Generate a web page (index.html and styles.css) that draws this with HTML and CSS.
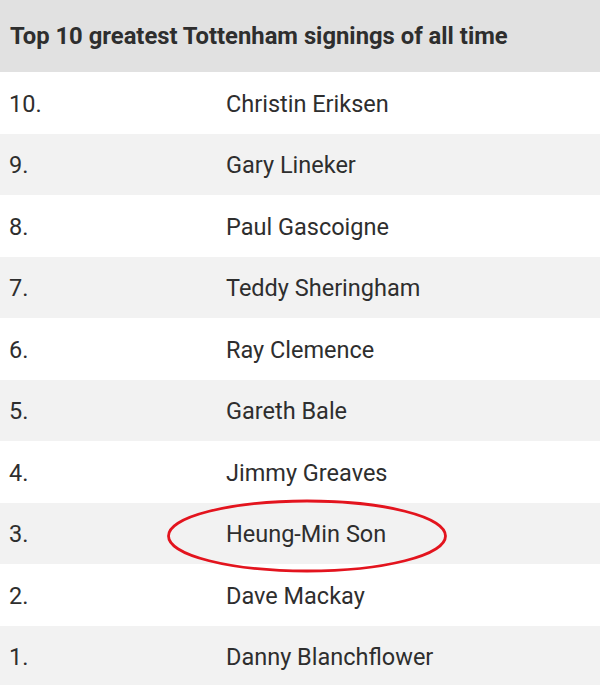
FILE: index.html
```html
<!DOCTYPE html>
<html>
<head>
<meta charset="utf-8">
<link rel="stylesheet" href="styles.css">
</head>
<body>
<div class="board">
  <div class="head">Top 10 greatest Tottenham signings of all time</div>
  <div class="row"><span class="num">10.</span><span class="name">Christin Eriksen</span></div>
  <div class="row alt"><span class="num">9.</span><span class="name">Gary Lineker</span></div>
  <div class="row"><span class="num">8.</span><span class="name">Paul Gascoigne</span></div>
  <div class="row alt"><span class="num">7.</span><span class="name">Teddy Sheringham</span></div>
  <div class="row"><span class="num">6.</span><span class="name">Ray Clemence</span></div>
  <div class="row alt"><span class="num">5.</span><span class="name">Gareth Bale</span></div>
  <div class="row"><span class="num">4.</span><span class="name">Jimmy Greaves</span></div>
  <div class="row alt highlight"><span class="num">3.</span><span class="name">Heung-Min Son</span>
    <svg class="circle" width="284" height="76" viewBox="0 0 284 76"><ellipse cx="142" cy="38" rx="138.5" ry="35" fill="none" stroke="#e3141e" stroke-width="2.8"/></svg>
  </div>
  <div class="row"><span class="num">2.</span><span class="name">Dave Mackay</span></div>
  <div class="row alt"><span class="num">1.</span><span class="name">Danny Blanchflower</span></div>
</div>
</body>
</html>
```
FILE: styles.css
```css
html, body {
  margin: 0;
  padding: 0;
  background: #ffffff;
}
.board {
  width: 600px;
  font-family: Roboto, "Liberation Sans", sans-serif;
  color: #2e2e2e;
}
.head {
  height: 72px;
  background: #e1e1e1;
  display: flex;
  align-items: center;
  padding-left: 10px;
  font-size: 23.8px;
  font-weight: 700;
  box-sizing: border-box;
}
.row {
  height: 61.5px;
  display: flex;
  align-items: center;
  font-size: 23.5px;
  position: relative;
  padding-top: 2px;
  box-sizing: border-box;
}
.row.alt {
  background: #f2f2f2;
}
.num {
  width: 226px;
  padding-left: 9px;
  box-sizing: border-box;
  flex: none;
}
.circle {
  position: absolute;
  left: 165px;
  top: -5px;
}
```
